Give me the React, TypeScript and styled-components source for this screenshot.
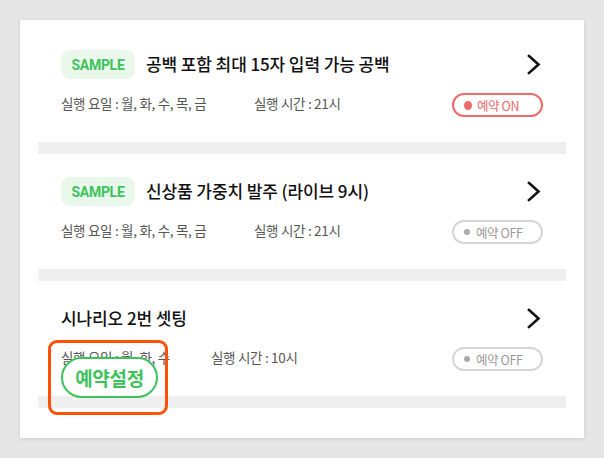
import React from "react";
import styled, { createGlobalStyle } from "styled-components";

const GlobalStyle = createGlobalStyle`
  html, body { margin: 0; padding: 0; background: #e6e6e6; }
  body { font-family: "Noto Sans CJK KR", "Noto Sans", sans-serif; }
  * { box-sizing: border-box; }
`;

const Page = styled.div`
  width: 604px;
  height: 458px;
  padding: 20px;
`;

const Card = styled.div`
  background: #fff;
  width: 564px;
  padding: 7px 18px 30px;
  box-shadow: 0 1px 4px rgba(0, 0, 0, 0.12);
`;

const Item = styled.div`
  position: relative;
  height: 115px;
  padding: 23px 23px 25px;
  display: flex;
  flex-direction: column;
  gap: 14px;
`;

const Divider = styled.div`
  height: 12px;
  background: #efefef;
`;

const TitleRow = styled.div`
  display: flex;
  align-items: center;
  height: 29px;
`;

const Badge = styled.span`
  display: inline-flex;
  align-items: center;
  justify-content: center;
  width: 74px;
  height: 29px;
  border-radius: 9px;
  background: #eaf8ec;
  color: #3cc35c;
  font-family: Roboto, "Liberation Sans", sans-serif;
  font-weight: 700;
  font-size: 14px;
  margin-right: 11px;
  letter-spacing: -0.3px;
`;

const Title = styled.span`
  flex: 1;
  font-size: 17px;
  font-weight: 500;
  color: #111;
  letter-spacing: -0.1px;
  padding-bottom: 2px;
`;

const Chevron = styled.svg`
  width: 14px;
  height: 21px;
  margin-right: 2px;
`;

const MetaRow = styled.div`
  display: flex;
  align-items: center;
  height: 24px;
`;

const Meta = styled.span<{ $w: number }>`
  width: ${(p) => p.$w}px;
  font-size: 13.5px;
  color: #555;
  letter-spacing: -0.3px;
  padding-bottom: 5px;
`;

const Spacer = styled.div`
  flex: 1;
`;

const Pill = styled.div<{ $on: boolean }>`
  width: 91px;
  height: 24px;
  border-radius: 12px;
  border: 2px solid ${(p) => (p.$on ? "#f06969" : "#d6d6d6")};
  display: flex;
  align-items: center;
  padding-left: 10px;
  gap: ${(p) => (p.$on ? "5px" : "6px")};
  font-size: 12.5px;
  color: ${(p) => (p.$on ? "#f06969" : "#999")};
  letter-spacing: -0.4px;
`;

const Dot = styled.span<{ $on: boolean }>`
  width: ${(p) => (p.$on ? 8 : 6)}px;
  height: ${(p) => (p.$on ? 9 : 6)}px;
  border-radius: 50%;
  background: ${(p) => (p.$on ? "#f06969" : "#aaa")};
`;

const Highlight = styled.div`
  position: absolute;
  left: 10px;
  top: 59px;
  width: 120px;
  height: 75px;
  border: 3px solid #ff5008;
  border-radius: 9px;
  z-index: 2;
`;

const SetButton = styled.div`
  position: absolute;
  left: 23px;
  top: 76px;
  width: 97px;
  height: 41px;
  border-radius: 21px;
  border: 2px solid #3cc35c;
  background: #fff;
  color: #3cc35c;
  font-size: 19px;
  font-weight: 700;
  display: flex;
  align-items: center;
  justify-content: center;
  letter-spacing: -0.3px;
  z-index: 1;
`;

type Row = {
  sample: boolean;
  title: string;
  days: string;
  time: string;
  on: boolean;
  dayW: number;
  highlight?: boolean;
};

const rows: Row[] = [
  { sample: true, title: "공백 포함 최대 15자 입력 가능 공백", days: "실행 요일 : 월, 화, 수, 목, 금", time: "실행 시간 : 21시", on: true, dayW: 193 },
  { sample: true, title: "신상품 가중치 발주 (라이브 9시)", days: "실행 요일 : 월, 화, 수, 목, 금", time: "실행 시간 : 21시", on: false, dayW: 193 },
  { sample: false, title: "시나리오 2번 셋팅", days: "실행 요일 : 월, 화, 수", time: "실행 시간 : 10시", on: false, dayW: 150, highlight: true },
];

export default function App() {
  return (
    <>
      <GlobalStyle />
      <Page>
        <Card>
          {rows.map((r, i) => (
            <React.Fragment key={i}>
              <Item>
                <TitleRow>
                  {r.sample && <Badge>SAMPLE</Badge>}
                  <Title>{r.title}</Title>
                  <Chevron viewBox="0 0 14 21" fill="none">
                    <path d="M2 2 L11.5 10.5 L2 19" stroke="#111" strokeWidth="2.6" strokeLinecap="square" strokeLinejoin="miter" />
                  </Chevron>
                </TitleRow>
                <MetaRow>
                  <Meta $w={r.dayW}>{r.days}</Meta>
                  <Meta $w={120}>{r.time}</Meta>
                  <Spacer />
                  <Pill $on={r.on}>
                    <Dot $on={r.on} />
                    {r.on ? "예약 ON" : "예약 OFF"}
                  </Pill>
                </MetaRow>
                {r.highlight && (
                  <>
                    <SetButton>예약설정</SetButton>
                    <Highlight />
                  </>
                )}
              </Item>
              <Divider />
            </React.Fragment>
          ))}
        </Card>
      </Page>
    </>
  );
}
